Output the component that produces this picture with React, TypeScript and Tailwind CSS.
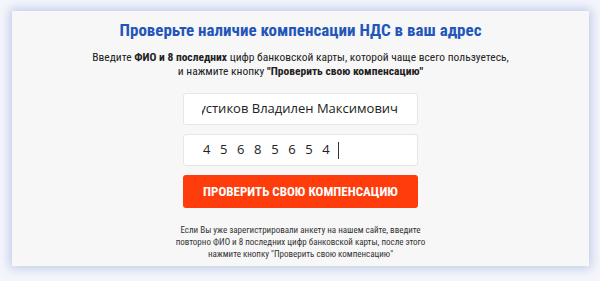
const condensed = {
  fontFamily: '"Roboto Condensed", "Liberation Sans Narrow", "DejaVu Sans Condensed", Roboto, sans-serif',
};

export default function App() {
  return (
    <div className="h-[281px] w-[600px] bg-[#f4f6fb] pl-[12px] pt-[11px]">
      <div
        className="flex h-[255px] w-[577px] flex-col items-center bg-[#f7f7f7] pt-[9px] shadow-[0_0_10px_2px_rgba(120,145,210,0.45)]"
        style={condensed}
      >
        <h1 className="shrink-0 text-[17px] font-bold leading-[21px] text-[#2356b9]">
          Проверьте наличие компенсации НДС в ваш адрес
        </h1>

        <p className="mt-[9px] shrink-0 text-center text-[11.5px] leading-[14px] text-[#222]">
          Введите <b>ФИО и 8 последних</b> цифр банковской карты, которой чаще всего пользуетесь,
          <br />
          и нажмите кнопку <b>"Проверить свою компенсацию"</b>
        </p>

        <div
          className="mt-[15px] flex w-[235px] shrink-0 flex-col gap-[9px]"
          style={{ fontFamily: '"Open Sans", "Noto Sans", sans-serif' }}
        >
          <div className="flex h-[32px] items-center rounded-[3px] border border-[#e6e6e6] bg-white px-[18px] text-[13px] text-[#222]">
            <div className="flex flex-1 justify-end overflow-hidden whitespace-nowrap pr-px">
              Кустиков Владилен Максимович
            </div>
          </div>
          <div className="flex h-[32px] items-center rounded-[3px] border border-[#e6e6e6] bg-white pl-[19px] text-[13px] text-[#222]">
            <span className="tracking-[9.6px]">45685654</span>
            <span className="-ml-[1px] h-[17px] w-px bg-[#333]" />
          </div>
        </div>

        <button
          type="button"
          className="mt-[9px] h-[33px] w-[235px] shrink-0 rounded-[3px] bg-[#ff3c0c] text-[13px] font-bold uppercase text-white"
        >
          Проверить свою компенсацию
        </button>

        <p className="mt-[16px] shrink-0 text-center text-[9px] leading-[12px] text-[#333]">
          Если Вы уже зарегистрировали анкету на нашем сайте, введите
          <br />
          повторно ФИО и 8 последних цифр банковской карты, после этого
          <br />
          нажмите кнопку "Проверить свою компенсацию"
        </p>
      </div>
    </div>
  );
}
